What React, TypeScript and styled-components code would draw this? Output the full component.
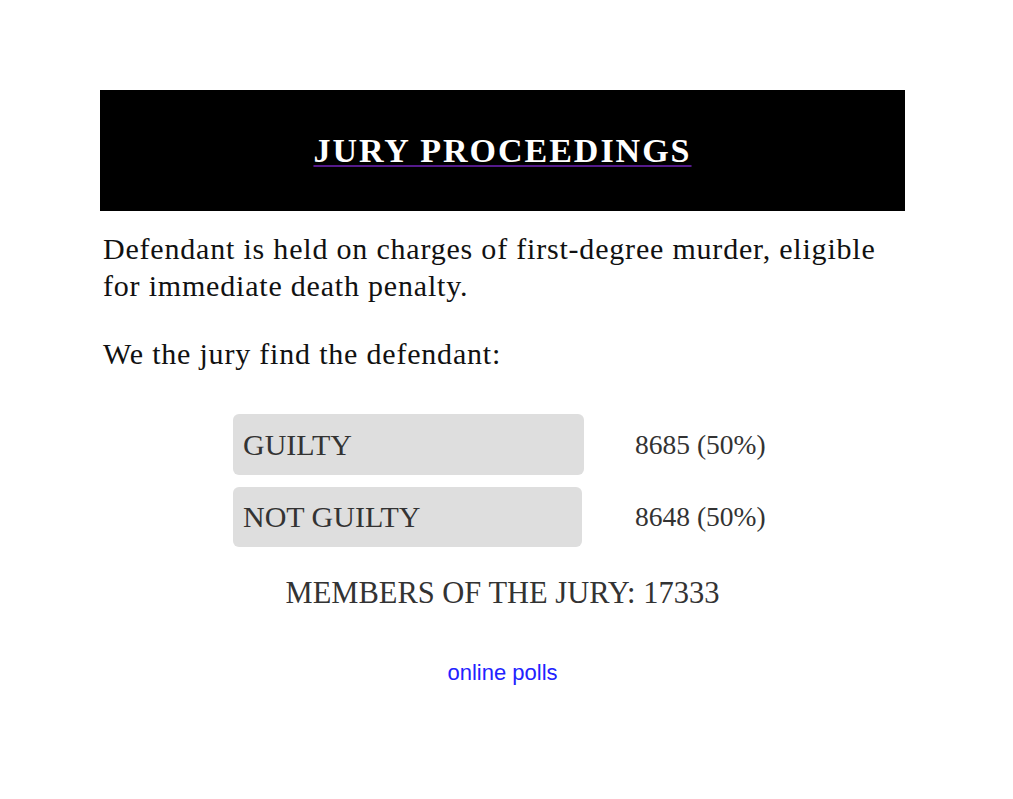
import React from "react";
import styled, { createGlobalStyle } from "styled-components";

const Global = createGlobalStyle`
  html, body { margin: 0; padding: 0; background: #fff; }
  body { font-family: "Liberation Serif", "Times New Roman", serif; }
`;

const Page = styled.div`
  width: 805px;
  margin: 0 0 0 100px;
  padding-top: 90px;
`;

const Header = styled.div`
  background: #000;
  height: 121px;
  display: flex;
  align-items: center;
  justify-content: center;
`;

const Title = styled.a`
  font-family: "Liberation Serif", serif;
  font-weight: bold;
  font-size: 34px;
  letter-spacing: 2px;
  color: #fff;
  text-decoration: underline;
  text-decoration-color: #551a8b;
  text-decoration-thickness: 2px;
  text-underline-offset: 3px;
`;

const Text = styled.p`
  margin: 0;
  font-size: 30px;
  letter-spacing: 0.8px;
  line-height: 37px;
  color: #111;
  padding-left: 3px;
`;

const Intro = styled(Text)`
  margin-top: 19px;
`;

const Prompt = styled(Text)`
  margin-top: 31px;
`;

const Options = styled.div`
  margin-top: 42px;
  display: flex;
  flex-direction: column;
  gap: 12px;
  padding-left: 133px;
`;

const Row = styled.div`
  display: flex;
  align-items: center;
`;

const Choice = styled.div<{ $w: number; $h: number }>`
  width: ${(p) => p.$w}px;
  height: ${(p) => p.$h}px;
  background: #dedede;
  border-radius: 6px;
  display: flex;
  align-items: center;
  padding-left: 10px;
  box-sizing: border-box;
  font-size: 30px;
  color: #333;
`;

const Count = styled.div<{ $gap: number }>`
  margin-left: ${(p) => p.$gap}px;
  font-size: 27.5px;
  color: #333;
`;

const Total = styled.div`
  margin-top: 29px;
  text-align: center;
  font-size: 30.5px;
  line-height: 35px;
  color: #333;
`;

const Footer = styled.div`
  margin-top: 49px;
  text-align: center;
  line-height: 26px;
`;

const PollLink = styled.a`
  font-family: "Liberation Sans", Arial, sans-serif;
  font-size: 22px;
  color: #2222ff;
  text-decoration: none;
`;

export default function App() {
  return (
    <>
      <Global />
      <Page>
        <Header>
          <Title href="#">JURY PROCEEDINGS</Title>
        </Header>
        <Intro>
          Defendant is held on charges of first-degree murder, eligible for
          immediate death penalty.
        </Intro>
        <Prompt>We the jury find the defendant:</Prompt>
        <Options>
          <Row>
            <Choice $w={351} $h={61}>GUILTY</Choice>
            <Count $gap={51}>8685 (50%)</Count>
          </Row>
          <Row>
            <Choice $w={349} $h={60}>NOT GUILTY</Choice>
            <Count $gap={53}>8648 (50%)</Count>
          </Row>
        </Options>
        <Total>MEMBERS OF THE JURY: 17333</Total>
        <Footer>
          <PollLink href="#">online polls</PollLink>
        </Footer>
      </Page>
    </>
  );
}
